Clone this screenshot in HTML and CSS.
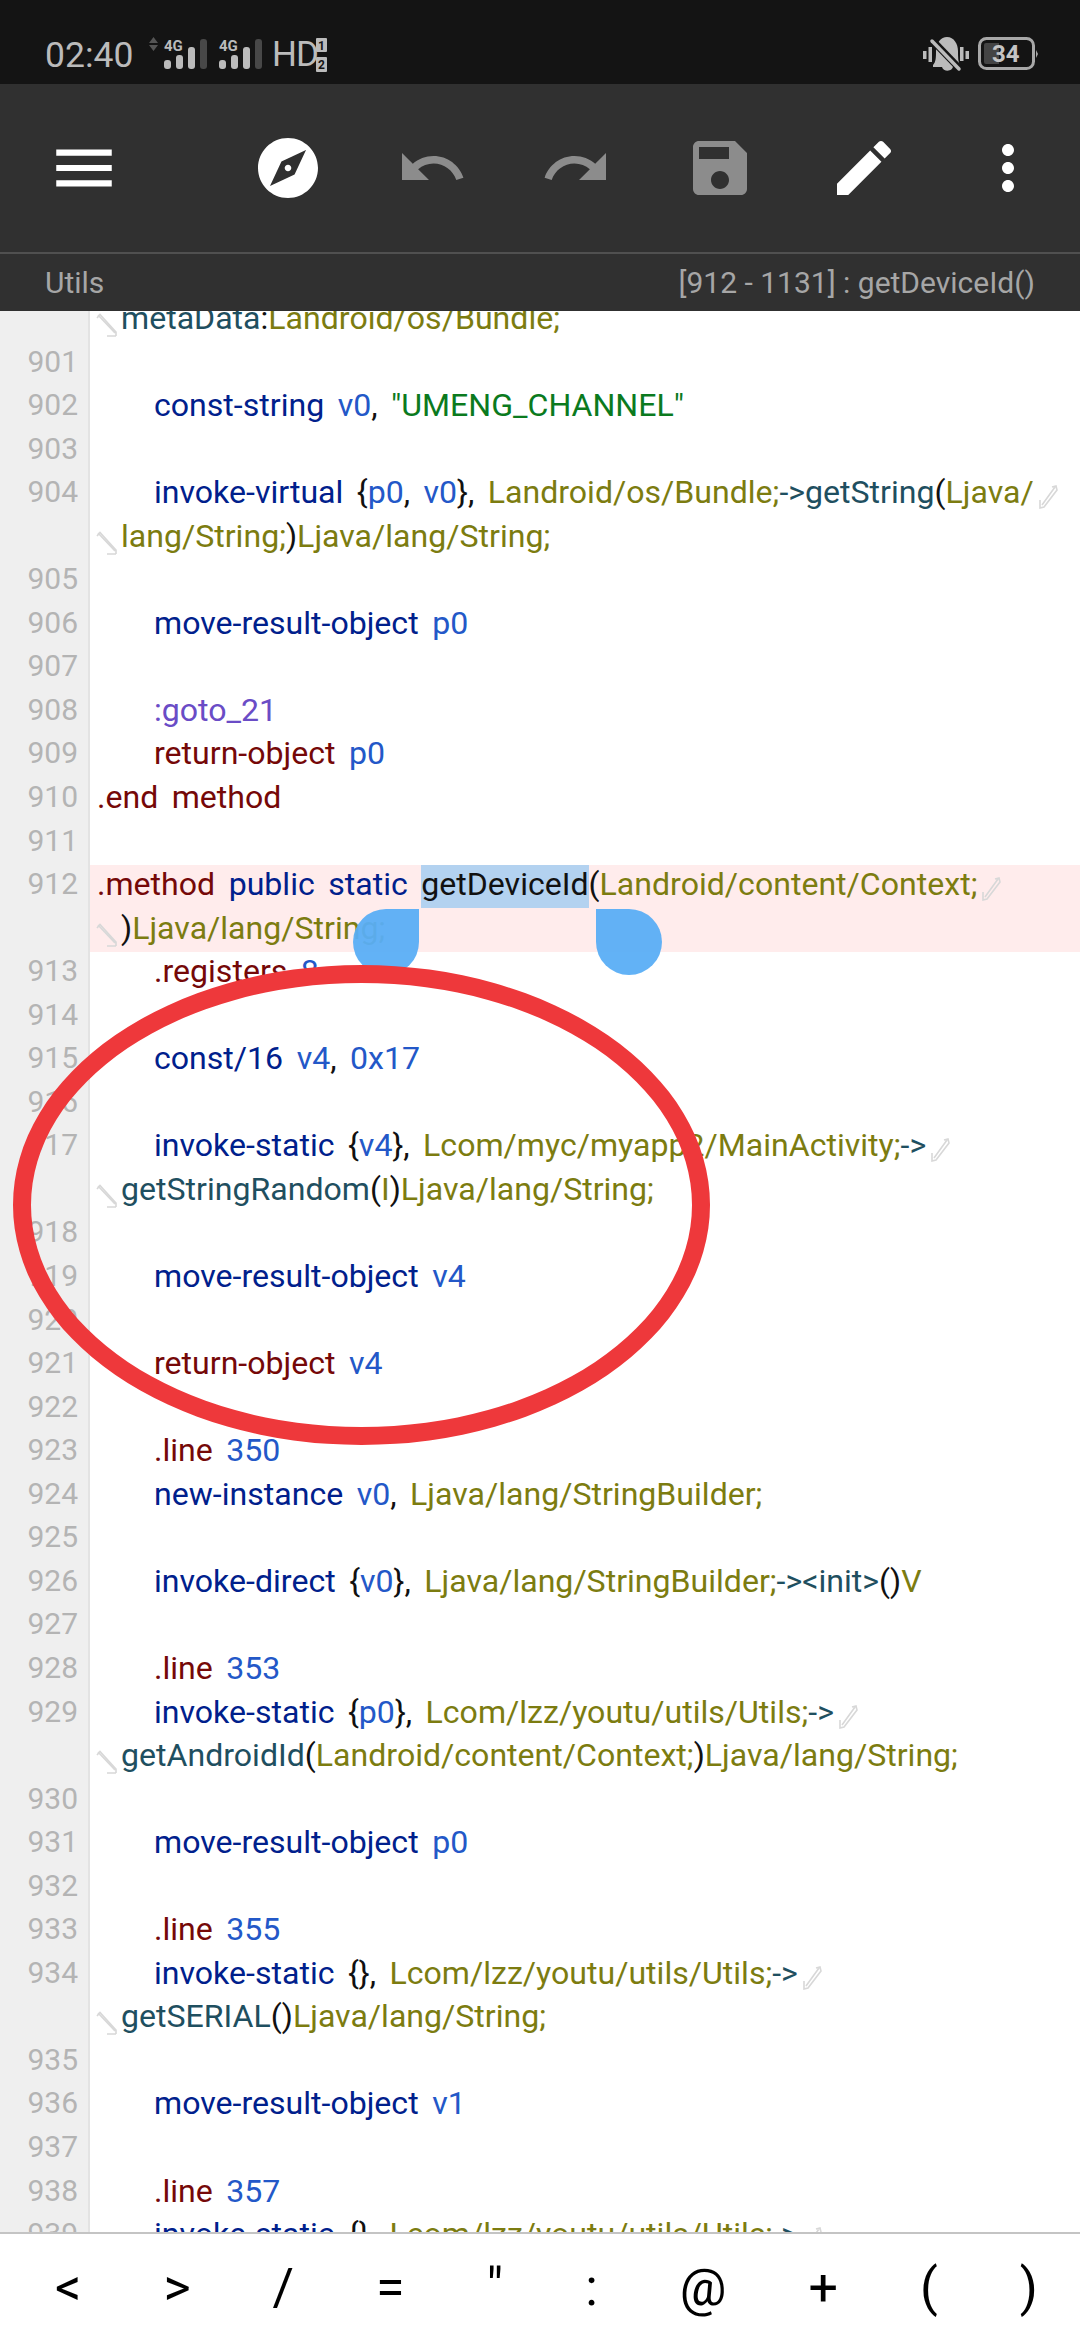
FILE: index.html
```html
<!DOCTYPE html>
<html lang="en">
<head>
<meta charset="utf-8">
<title>Utils</title>
<link rel="stylesheet" href="styles.css">
</head>
<body>
<svg width="0" height="0" class="defs">
  <symbol id="wrap-start" viewBox="0 0 22 24"><path d="M2 2 L19 20 M1 5 L4 1.500 L20 19 L20 23 M20 23 L11 23" fill="none" stroke="#d8d8d8" stroke-width="1.600"/></symbol>
  <symbol id="wrap-end" viewBox="0 0 20 24"><path d="M17 2 L4 20 M14 2 L18 1 L19 5 L6 22 L2 23 L2 15" fill="none" stroke="#d8d8d8" stroke-width="1.600"/></symbol>
</svg>

<header class="statusbar">
  <span class="time">02:40</span>
  <svg class="signal" width="116" height="36" viewBox="0 0 116 36">
    <path d="M0 7 L4.500 1 L9 7Z M0 9 L4.500 15 L9 9Z" fill="#555"/>
    <text x="15" y="15" class="net">4G</text>
    <rect x="15" y="24" width="7" height="9" rx="3" fill="#bbb"/>
    <rect x="27" y="19" width="7" height="14" rx="3" fill="#bbb"/>
    <rect x="39" y="11" width="7" height="22" rx="3" fill="#bbb"/>
    <rect x="51" y="3" width="7" height="30" rx="3" fill="#484848"/>
    <text x="70" y="15" class="net">4G</text>
    <rect x="70" y="24" width="7" height="9" rx="3" fill="#bbb"/>
    <rect x="82" y="19" width="7" height="14" rx="3" fill="#bbb"/>
    <rect x="94" y="11" width="7" height="22" rx="3" fill="#bbb"/>
    <rect x="106" y="3" width="7" height="30" rx="3" fill="#484848"/>
  </svg>
  <span class="hd">HD</span>
  <svg class="sim" width="11" height="34" viewBox="0 0 11 34">
    <rect width="11" height="14" rx="1" fill="#bbb"/>
    <rect y="19" width="11" height="15" rx="1" fill="#bbb"/>
    <text x="5.500" y="12" class="simnum">1</text>
    <text x="5.500" y="31" class="simnum">2</text>
  </svg>
  <span class="spacer"></span>
  <svg class="bell" width="46" height="36" viewBox="0 0 46 36">
    <path d="M0 15h3.500v8H0z M5.500 11h3.500v15H5.500z M37 11h3.500v14H37z M42.500 15H46v8h-3.500z" fill="#bbb"/>
    <path d="M10 29 C13 26 13 21 13 15 C13 7 18 1 24 1 C31 1 35 8 35 15 C35 21 35 26 37 30 L30 30 C30 36 20 36 19 31 L10 31Z" fill="#bbb"/>
    <path d="M9 4 L36 32" stroke="#141414" stroke-width="7"/>
    <path d="M9 5 L36 33" stroke="#bbb" stroke-width="3.500" stroke-linecap="round"/>
  </svg>
  <svg class="battery" width="60" height="34" viewBox="0 0 60 34">
    <rect x="1.500" y="1.500" width="54" height="30" rx="7" fill="none" stroke="#a8a8a8" stroke-width="3"/>
    <path d="M6 8 a2 2 0 0 1 2 -2 H21 V27 H8 a2 2 0 0 1 -2 -2Z" fill="#444"/>
    <path d="M58 13 L60 17 L58 21Z" fill="#a8a8a8"/>
    <text x="14" y="25" class="level">34</text>
  </svg>
</header>

<nav class="toolbar">
  <svg class="icon menu" viewBox="0 0 24 24"><path d="M3 18h18v-2H3v2zm0-5h18v-2H3v2zm0-7v2h18V6H3z"/></svg>
  <svg class="icon" viewBox="0 0 24 24"><path d="M12 10.900c-.61 0-1.100.49-1.100 1.100s.49 1.100 1.100 1.100c.61 0 1.100-.49 1.100-1.100s-.49-1.100-1.100-1.100zM12 2C6.480 2 2 6.480 2 12s4.480 10 10 10 10-4.480 10-10S17.520 2 12 2zm2.190 12.190L6 18l3.810-8.190L18 6l-3.810 8.190z"/></svg>
  <svg class="icon dim" viewBox="0 0 24 24"><path d="M12.500 8c-2.650 0-5.050.99-6.900 2.600L2 7v9h9l-3.620-3.620c1.390-1.160 3.160-1.880 5.120-1.880 3.540 0 6.550 2.310 7.600 5.500l2.370-.78C21.080 11.030 17.150 8 12.500 8z"/></svg>
  <svg class="icon dim" viewBox="0 0 24 24"><path d="M18.400 10.600C16.550 8.990 14.150 8 11.500 8c-4.650 0-8.580 3.030-9.960 7.220L3.900 16c1.050-3.190 4.050-5.500 7.600-5.500 1.950 0 3.730.72 5.120 1.880L13 16h9V7l-3.600 3.600z"/></svg>
  <svg class="icon dim" viewBox="0 0 24 24"><path d="M17 3H5c-1.110 0-2 .9-2 2v14c0 1.100.89 2 2 2h14c1.100 0 2-.9 2-2V7l-4-4zm-5 16c-1.660 0-3-1.340-3-3s1.340-3 3-3 3 1.340 3 3-1.340 3-3 3zm3-10H5V5h10v4z"/></svg>
  <svg class="icon" viewBox="0 0 24 24"><path d="M3 17.250V21h3.750L17.810 9.940l-3.750-3.750L3 17.250zM20.710 7.040c.39-.39.39-1.020 0-1.410l-2.340-2.340c-.39-.39-1.020-.39-1.410 0l-1.830 1.830 3.750 3.750 1.830-1.830z"/></svg>
  <svg class="icon" viewBox="0 0 24 24"><path d="M12 8c1.100 0 2-.9 2-2s-.9-2-2-2-2 .9-2 2 .9 2 2 2zm0 2c-1.100 0-2 .9-2 2s.9 2 2 2 2-.9 2-2-.9-2-2-2zm0 6c-1.100 0-2 .9-2 2s.9 2 2 2 2-.9 2-2-.9-2-2-2z"/></svg>
</nav>

<div class="subbar"><span>Utils</span><span>[912 - 1131] : getDeviceId()</span></div>

<main class="editor">
  <div class="row first"><div class="num"></div><div class="code"><div class="vl"><svg class="ws"><use href="#wrap-start"/></svg><i class="m">metaData</i><i class="p">:</i><i class="t">Landroid/os/Bundle;</i></div></div></div>
  <div class="row"><div class="num">901</div><div class="code"><div class="vl"></div></div></div>
  <div class="row"><div class="num">902</div><div class="code"><div class="vl in"><i class="k">const-string</i> <i class="r">v0</i><i class="p">,</i> <i class="s">"UMENG_CHANNEL"</i></div></div></div>
  <div class="row"><div class="num">903</div><div class="code"><div class="vl"></div></div></div>
  <div class="row"><div class="num">904</div><div class="code"><div class="vl in"><i class="k">invoke-virtual</i> <i class="p">{</i><i class="r">p0</i><i class="p">,</i> <i class="r">v0</i><i class="p">},</i> <i class="t">Landroid/os/Bundle;</i><i class="m">-&gt;getString</i><i class="p">(</i><i class="t">Ljava/</i><svg class="we"><use href="#wrap-end"/></svg></div><div class="vl"><svg class="ws"><use href="#wrap-start"/></svg><i class="t">lang/String;</i><i class="p">)</i><i class="t">Ljava/lang/String;</i></div></div></div>
  <div class="row"><div class="num">905</div><div class="code"><div class="vl"></div></div></div>
  <div class="row"><div class="num">906</div><div class="code"><div class="vl in"><i class="k">move-result-object</i> <i class="r">p0</i></div></div></div>
  <div class="row"><div class="num">907</div><div class="code"><div class="vl"></div></div></div>
  <div class="row"><div class="num">908</div><div class="code"><div class="vl in"><i class="l">:goto_21</i></div></div></div>
  <div class="row"><div class="num">909</div><div class="code"><div class="vl in"><i class="d">return-object</i> <i class="r">p0</i></div></div></div>
  <div class="row"><div class="num">910</div><div class="code"><div class="vl"><i class="d">.end method</i></div></div></div>
  <div class="row"><div class="num">911</div><div class="code"><div class="vl"></div></div></div>
  <div class="row"><div class="num">912</div><div class="code hot"><div class="vl"><i class="d">.method</i> <i class="k">public static</i> <i class="sel">getDeviceId</i><i class="p">(</i><i class="t">Landroid/content/Context;</i><svg class="we"><use href="#wrap-end"/></svg></div><div class="vl"><svg class="ws"><use href="#wrap-start"/></svg><i class="p">)</i><i class="t">Ljava/lang/String;</i></div></div></div>
  <div class="row"><div class="num">913</div><div class="code"><div class="vl in"><i class="d">.registers</i> <i class="r">8</i></div></div></div>
  <div class="row"><div class="num">914</div><div class="code"><div class="vl"></div></div></div>
  <div class="row"><div class="num">915</div><div class="code"><div class="vl in"><i class="k">const/16</i> <i class="r">v4</i><i class="p">,</i> <i class="r">0x17</i></div></div></div>
  <div class="row"><div class="num">916</div><div class="code"><div class="vl"></div></div></div>
  <div class="row"><div class="num">917</div><div class="code"><div class="vl in"><i class="k">invoke-static</i> <i class="p">{</i><i class="r">v4</i><i class="p">},</i> <i class="t">Lcom/myc/myapp2/MainActivity;</i><i class="m">-&gt;</i><svg class="we"><use href="#wrap-end"/></svg></div><div class="vl"><svg class="ws"><use href="#wrap-start"/></svg><i class="m">getStringRandom</i><i class="p">(</i><i class="t">I</i><i class="p">)</i><i class="t">Ljava/lang/String;</i></div></div></div>
  <div class="row"><div class="num">918</div><div class="code"><div class="vl"></div></div></div>
  <div class="row"><div class="num">919</div><div class="code"><div class="vl in"><i class="k">move-result-object</i> <i class="r">v4</i></div></div></div>
  <div class="row"><div class="num">920</div><div class="code"><div class="vl"></div></div></div>
  <div class="row"><div class="num">921</div><div class="code"><div class="vl in"><i class="d">return-object</i> <i class="r">v4</i></div></div></div>
  <div class="row"><div class="num">922</div><div class="code"><div class="vl"></div></div></div>
  <div class="row"><div class="num">923</div><div class="code"><div class="vl in"><i class="d">.line</i> <i class="r">350</i></div></div></div>
  <div class="row"><div class="num">924</div><div class="code"><div class="vl in"><i class="k">new-instance</i> <i class="r">v0</i><i class="p">,</i> <i class="t">Ljava/lang/StringBuilder;</i></div></div></div>
  <div class="row"><div class="num">925</div><div class="code"><div class="vl"></div></div></div>
  <div class="row"><div class="num">926</div><div class="code"><div class="vl in"><i class="k">invoke-direct</i> <i class="p">{</i><i class="r">v0</i><i class="p">},</i> <i class="t">Ljava/lang/StringBuilder;</i><i class="m">-&gt;&lt;init&gt;</i><i class="p">()</i><i class="t">V</i></div></div></div>
  <div class="row"><div class="num">927</div><div class="code"><div class="vl"></div></div></div>
  <div class="row"><div class="num">928</div><div class="code"><div class="vl in"><i class="d">.line</i> <i class="r">353</i></div></div></div>
  <div class="row"><div class="num">929</div><div class="code"><div class="vl in"><i class="k">invoke-static</i> <i class="p">{</i><i class="r">p0</i><i class="p">},</i> <i class="t">Lcom/lzz/youtu/utils/Utils;</i><i class="m">-&gt;</i><svg class="we"><use href="#wrap-end"/></svg></div><div class="vl"><svg class="ws"><use href="#wrap-start"/></svg><i class="m">getAndroidId</i><i class="p">(</i><i class="t">Landroid/content/Context;</i><i class="p">)</i><i class="t">Ljava/lang/String;</i></div></div></div>
  <div class="row"><div class="num">930</div><div class="code"><div class="vl"></div></div></div>
  <div class="row"><div class="num">931</div><div class="code"><div class="vl in"><i class="k">move-result-object</i> <i class="r">p0</i></div></div></div>
  <div class="row"><div class="num">932</div><div class="code"><div class="vl"></div></div></div>
  <div class="row"><div class="num">933</div><div class="code"><div class="vl in"><i class="d">.line</i> <i class="r">355</i></div></div></div>
  <div class="row"><div class="num">934</div><div class="code"><div class="vl in"><i class="k">invoke-static</i> <i class="p">{},</i> <i class="t">Lcom/lzz/youtu/utils/Utils;</i><i class="m">-&gt;</i><svg class="we"><use href="#wrap-end"/></svg></div><div class="vl"><svg class="ws"><use href="#wrap-start"/></svg><i class="m">getSERIAL</i><i class="p">()</i><i class="t">Ljava/lang/String;</i></div></div></div>
  <div class="row"><div class="num">935</div><div class="code"><div class="vl"></div></div></div>
  <div class="row"><div class="num">936</div><div class="code"><div class="vl in"><i class="k">move-result-object</i> <i class="r">v1</i></div></div></div>
  <div class="row"><div class="num">937</div><div class="code"><div class="vl"></div></div></div>
  <div class="row"><div class="num">938</div><div class="code"><div class="vl in"><i class="d">.line</i> <i class="r">357</i></div></div></div>
  <div class="row"><div class="num">939</div><div class="code"><div class="vl in"><i class="k">invoke-static</i> <i class="p">{},</i> <i class="t">Lcom/lzz/youtu/utils/Utils;</i><i class="m">-&gt;</i><svg class="we"><use href="#wrap-end"/></svg></div></div></div>
</main>

<footer class="keys">
  <span>&lt;</span><span>&gt;</span><span>/</span><span>=</span><span>"</span><span>:</span><span>@</span><span>+</span><span>(</span><span>)</span>
</footer>

<div class="handle left"></div>
<div class="handle right"></div>
<div class="circle"></div>
</body>
</html>
```
FILE: styles.css
```css
* { box-sizing: border-box; }
html, body { margin: 0; padding: 0; }
body {
  width: 1080px;
  height: 2340px;
  display: flex;
  flex-direction: column;
  overflow: hidden;
  position: relative;
  background: #fff;
  font-family: Roboto, "Noto Sans", sans-serif;
}
.defs { position: absolute; }

.statusbar {
  height: 84px;
  flex: none;
  background: #141414;
  display: flex;
  align-items: flex-start;
  padding: 0 45px;
  color: #bbb;
}
.time { font-size: 35.500px; line-height: 40px; margin-top: 35px; width: 104px; }
.signal { margin-top: 36px; }
.hd { font-size: 35px; line-height: 40px; margin-top: 35px; margin-left: 7px; width: 44px; letter-spacing: -1px; }
.sim { margin-top: 38px; }
.spacer { flex: 1; }
.bell { margin-top: 36px; margin-right: 9px; }
.battery { margin-top: 37px; margin-right: -3px; }
.net { font: 700 15px Roboto, sans-serif; fill: #bbb; }
.simnum { font: 700 12px Roboto, sans-serif; fill: #141414; text-anchor: middle; }
.level { font: 700 24px Roboto, sans-serif; fill: #c4c4c4; }

.toolbar {
  height: 168px;
  flex: none;
  background: #303030;
  display: flex;
  align-items: center;
  gap: 72px;
  padding-left: 48px;
}
.icon { width: 72px; height: 72px; fill: #fff; flex: none; }
.icon.dim { fill: #8c8c8c; }
.icon.menu { width: 74px; height: 74px; margin-right: 59px; margin-left: -1px; }

.subbar {
  height: 59px;
  flex: none;
  background: #303030;
  border-top: 2px solid #505050;
  display: flex;
  justify-content: space-between;
  align-items: center;
  padding: 0 45px;
  color: #a6a6a6;
  font-size: 30px;
}

.editor { flex: 1; min-height: 0; overflow: hidden; }
.row { display: flex; }
.row.first { margin-top: -12px; }
.num {
  width: 90px;
  flex: none;
  background: #efefef;
  border-right: 2px solid #e3e3e3;
  color: #b4b4b4;
  font-size: 30px;
  line-height: 38px;
  text-align: right;
  padding-right: 10px;
}
.code {
  flex: 1;
  padding-left: 7px;
  font-size: 32.100px;
  word-spacing: 5.500px;
  min-width: 0;
}
.code.hot { background: #ffecec; }
.vl { height: 43.55px; line-height: 38px; white-space: pre; }
.vl.in { padding-left: 57px; }
.vl i { font-style: normal; }
.ws { display: inline-block; vertical-align: top; width: 22px; height: 24px; margin: 14px 3px 0 -1px; }
.we { display: inline-block; vertical-align: top; width: 20px; height: 24px; margin: 12px 0 0 4px; }
.k { color: #00208c; }
.r { color: #2358c8; }
.t { color: #7c7c10; }
.s { color: #0b7a1e; }
.d { color: #750808; }
.m { color: #1f4f60; }
.p { color: #111; }
.l { color: #6a4cc6; }
.sel { display: inline-block; vertical-align: top; background: #b3d2f0; color: #111; height: 43px; }

.keys {
  height: 108px;
  flex: none;
  background: #fff;
  border-top: 2px solid #c4c4c4;
  display: flex;
  justify-content: space-between;
  align-items: center;
  padding: 0 42px 0 55px;
  font-size: 52px;
  color: #000;
}

.handle {
  position: absolute;
  top: 909px;
  width: 66px;
  height: 66px;
  border-radius: 50%;
  background: #5aaef6;
  opacity: .95;
}
.handle.left { left: 353px; border-top-right-radius: 0; }
.handle.right { left: 596px; border-top-left-radius: 0; }
.circle {
  position: absolute;
  left: 13px;
  top: 965px;
  width: 697px;
  height: 480px;
  border: 18px solid #ee383b;
  border-radius: 50%;
}
```
